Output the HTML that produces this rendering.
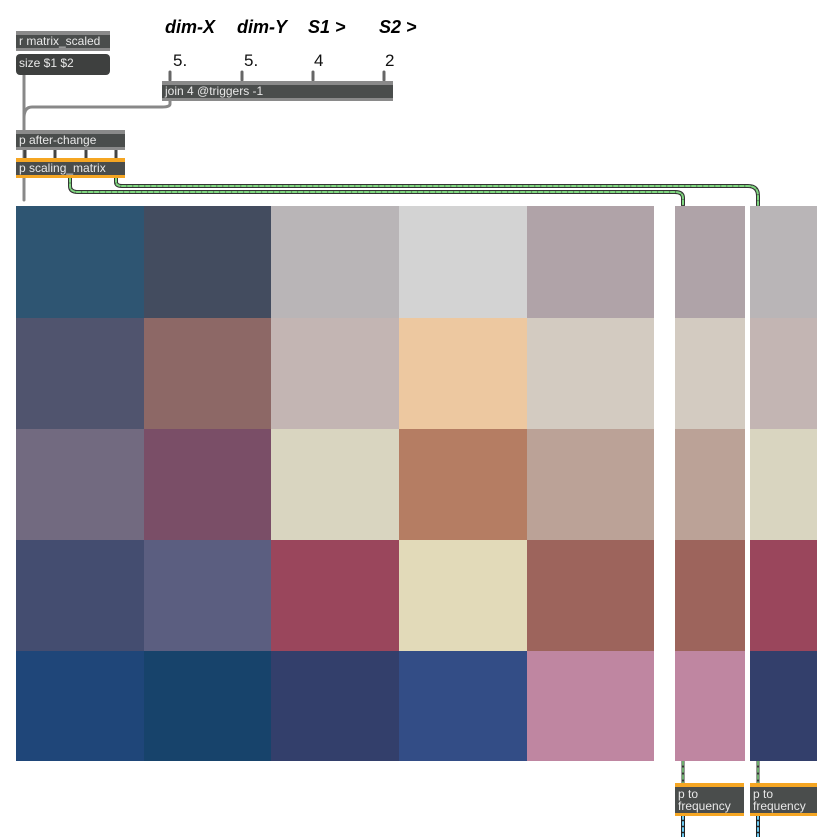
<!DOCTYPE html>
<html><head><style>
body{margin:0;width:838px;height:837px;background:#fff;position:relative;overflow:hidden;font-family:"Liberation Sans",sans-serif}
.a{position:absolute}
.obj{position:absolute;background:#4a4d4c;color:#e8e8e8;font-size:12px;line-height:13px;padding-left:3px;box-sizing:border-box;border-top:4px solid #8a8a8a;border-bottom:3px solid #8a8a8a;white-space:nowrap}
.org{border-color:#f5a623}
.lbl{position:absolute;font-weight:bold;font-style:italic;font-size:18px;color:#000}
.num{position:absolute;font-size:17px;color:#111}
.c{position:absolute}
</style></head><body>
<svg class="a" style="left:0;top:0" width="838" height="837">
<g fill="none" stroke-linecap="round">
<path d="M24 74 V200" stroke="#888" stroke-width="3"/>
<path d="M170 100 V104 Q170 107 162 107 H32 Q24 107 24 118 V131" stroke="#888" stroke-width="3"/>
<path d="M170 72 V80 M242 72 V80 M313 72 V80 M384 72 V80" stroke="#666" stroke-width="3"/>
<path d="M25 150 V158 M55 150 V158 M86 150 V158 M116 150 V158" stroke="#444" stroke-width="3"/>
<path d="M70 178 V186 Q70 192 78 192 H675 Q683 192 683 198 V205" stroke="#333" stroke-width="4"/>
<path d="M70 178 V186 Q70 192 78 192 H675 Q683 192 683 198 V205" stroke="#7fd67f" stroke-width="2" stroke-dasharray="4 2"/>
<path d="M116 178 V182 Q116 186 122 186 H748 Q758 186 758 196 V205" stroke="#333" stroke-width="4"/>
<path d="M116 178 V182 Q116 186 122 186 H748 Q758 186 758 196 V205" stroke="#7fd67f" stroke-width="2" stroke-dasharray="4 2"/>
<path d="M683 761 V783 M758 761 V783" stroke="#333" stroke-width="3"/>
<path d="M683 761 V783 M758 761 V783" stroke="#7fd67f" stroke-width="1.5" stroke-dasharray="4 3"/>
<path d="M683 816 V837 M758 816 V837" stroke="#222" stroke-width="4"/>
<path d="M683 816 V837 M758 816 V837" stroke="#6cc9f0" stroke-width="2" stroke-dasharray="3 3"/>
</g></svg>
<div class="obj" style="left:16px;top:31px;width:94px;height:20px">r matrix_scaled</div>
<div class="a" style="left:16px;top:54px;width:94px;height:21px;background:#3e403f;border-radius:4px;color:#e8e8e8;font-size:12px;line-height:19px;padding-left:3px;box-sizing:border-box">size $1 $2</div>
<div class="obj" style="left:162px;top:81px;width:231px;height:20px">join 4 @triggers -1</div>
<div class="obj" style="left:16px;top:130px;width:109px;height:20px">p after-change</div>
<div class="obj org" style="left:16px;top:158px;width:109px;height:20px">p scaling_matrix</div>
<div class="lbl" style="left:165px;top:17px">dim-X</div>
<div class="lbl" style="left:237px;top:17px">dim-Y</div>
<div class="lbl" style="left:308px;top:17px">S1 &gt;</div>
<div class="lbl" style="left:379px;top:17px">S2 &gt;</div>
<div class="num" style="left:173px;top:51px">5.</div>
<div class="num" style="left:244px;top:51px">5.</div>
<div class="num" style="left:314px;top:51px">4</div>
<div class="num" style="left:385px;top:51px">2</div>
<div id="g"></div>
<div class="obj org" style="left:675px;top:783px;width:69px;height:33px;line-height:12px;padding-top:1px">p to<br>frequency</div>
<div class="obj org" style="left:750px;top:783px;width:67px;height:33px;line-height:12px;padding-top:1px">p to<br>frequency</div>
<script>
var C=[["#2e5572","#434c5f","#b9b5b7","#d3d3d3","#b0a3a8"],
["#50546e","#8d6866","#c3b5b3","#edc8a0","#d3cbc1"],
["#726a80","#7a4e67","#d9d5c0","#b57d63","#bba297"],
["#444d70","#5b5e80","#9a465c","#e2dab9","#9d645c"],
["#1f4679","#17436b","#333f6b","#334d86","#bf86a1"]];
var S1=["#afa3a8","#d3cbc1","#bba297","#9d645c","#bf86a1"],S2=["#b9b5b7","#c3b5b3","#d9d5c0","#9a465c","#333f6b"];
var X=[16,144,271,399,527,654],Y=[206,318,429,540,651,761],h="";
for(var r=0;r<5;r++){for(var c=0;c<5;c++)h+='<div class="c" style="left:'+X[c]+'px;top:'+Y[r]+'px;width:'+(X[c+1]-X[c])+'px;height:'+(Y[r+1]-Y[r])+'px;background:'+C[r][c]+'"></div>';
h+='<div class="c" style="left:675px;top:'+Y[r]+'px;width:70px;height:'+(Y[r+1]-Y[r])+'px;background:'+S1[r]+'"></div>';
h+='<div class="c" style="left:750px;top:'+Y[r]+'px;width:67px;height:'+(Y[r+1]-Y[r])+'px;background:'+S2[r]+'"></div>';}
document.getElementById("g").innerHTML=h;
</script>
</body></html>
